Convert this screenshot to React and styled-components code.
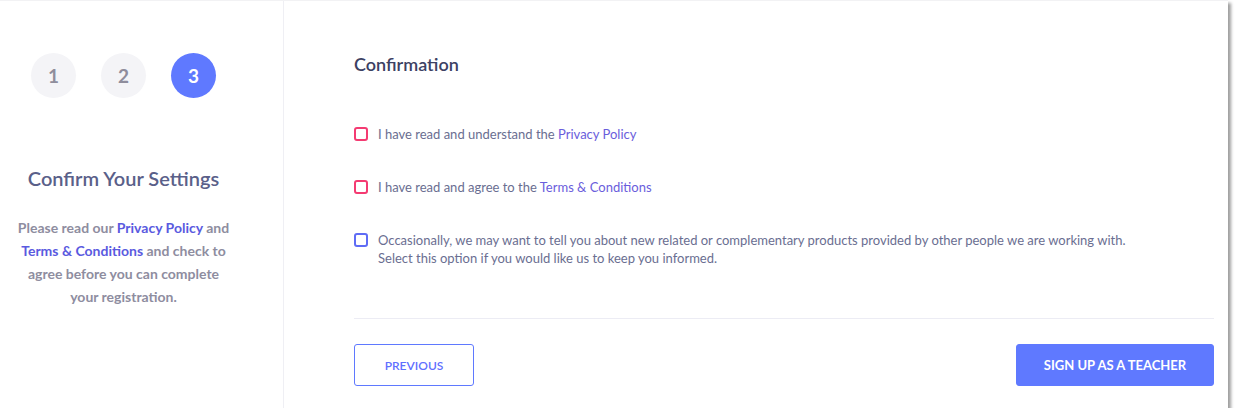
import styled, { createGlobalStyle } from 'styled-components'

const GlobalStyle = createGlobalStyle`
  html, body {
    margin: 0;
    padding: 0;
    background: #ffffff;
  }
  body {
    font-family: Lato, "Open Sans", sans-serif;
  }
`

const Card = styled.div`
  width: 1228px;
  height: 408px;
  box-sizing: border-box;
  display: flex;
  background: #ffffff;
  border-top: 1px solid #f2f2f4;
  box-shadow: 3px 3px 3px rgba(0, 0, 0, 0.38);
`

const Sidebar = styled.aside`
  width: 284px;
  box-sizing: border-box;
  border-right: 1px solid #efeff4;
  padding: 52px 36px 0 0;
  display: flex;
  flex-direction: column;
  align-items: center;
`

const Steps = styled.div`
  display: flex;
  gap: 25px;
`

const Step = styled.div`
  width: 45px;
  height: 45px;
  border-radius: 50%;
  display: flex;
  align-items: center;
  justify-content: center;
  font-size: 19px;
  font-weight: 700;
  background: ${p => (p.$active ? '#5f79ff' : '#f4f4f7')};
  color: ${p => (p.$active ? '#ffffff' : '#8f8d9c')};
`

const SideTitle = styled.h2`
  margin: 67px 0 0;
  font-size: 20px;
  line-height: 26px;
  font-weight: 600;
  color: #5a6089;
`

const SideText = styled.p`
  margin: 25px 0 0;
  width: 222px;
  text-align: center;
  font-size: 14px;
  line-height: 23px;
  font-weight: 700;
  color: #8e8d9f;
`

const Link = styled.span`
  color: ${p => p.$color || '#5a5ae0'};
`

const Main = styled.main`
  flex: 1;
  padding: 51px 14px 22px 70px;
  display: flex;
  flex-direction: column;
`

const Title = styled.h1`
  margin: 0;
  font-size: 18px;
  line-height: 24px;
  font-weight: 600;
  color: #3c4163;
`

const Options = styled.div`
  margin-top: 49px;
  display: flex;
  flex-direction: column;
  gap: 35px;
`

const Option = styled.label`
  display: flex;
  align-items: flex-start;
  gap: 10px;
  font-size: 13px;
  line-height: 18px;
  color: #6a6e91;
`

const Box = styled.span`
  flex: none;
  width: 14px;
  height: 14px;
  margin-top: 2px;
  box-sizing: border-box;
  border: 2px solid ${p => p.$color};
  border-radius: 3px;
`

const Divider = styled.hr`
  margin: 51px 0 0;
  border: none;
  border-top: 1px solid #ececf4;
`

const Actions = styled.div`
  margin-top: 25px;
  display: flex;
  justify-content: space-between;
`

const Button = styled.button`
  height: 42px;
  box-sizing: border-box;
  padding: 0;
  border-radius: 3px;
  font-family: inherit;
  text-transform: uppercase;
  cursor: pointer;
  border: 1px solid #5f79ff;
  background: ${p => (p.$primary ? '#5f79ff' : '#ffffff')};
  color: ${p => (p.$primary ? '#ffffff' : '#5f6fff')};
  width: ${p => (p.$primary ? '198px' : '120px')};
  font-size: ${p => (p.$primary ? '13px' : '12px')};
  font-weight: ${p => (p.$primary ? 700 : 600)};
`

export default function App() {
  return (
    <>
      <GlobalStyle />
      <Card>
        <Sidebar>
          <Steps>
            <Step>1</Step>
            <Step>2</Step>
            <Step $active>3</Step>
          </Steps>
          <SideTitle>Confirm Your Settings</SideTitle>
          <SideText>
            Please read our <Link>Privacy Policy</Link> and{' '}
            <Link>Terms &amp; Conditions</Link> and check to agree before you can complete your
            registration.
          </SideText>
        </Sidebar>
        <Main>
          <Title>Confirmation</Title>
          <Options>
            <Option>
              <Box $color="#f43b72" />
              <span>
                I have read and understand the <Link $color="#6a5ddc">Privacy Policy</Link>
              </span>
            </Option>
            <Option>
              <Box $color="#f43b72" />
              <span>
                I have read and agree to the <Link $color="#6a5ddc">Terms &amp; Conditions</Link>
              </span>
            </Option>
            <Option>
              <Box $color="#5f6cf5" />
              <span>
                Occasionally, we may want to tell you about new related or complementary products
                provided by other people we are working with.
                <br />
                Select this option if you would like us to keep you informed.
              </span>
            </Option>
          </Options>
          <Divider />
          <Actions>
            <Button>Previous</Button>
            <Button $primary>Sign up as a teacher</Button>
          </Actions>
        </Main>
      </Card>
    </>
  )
}
